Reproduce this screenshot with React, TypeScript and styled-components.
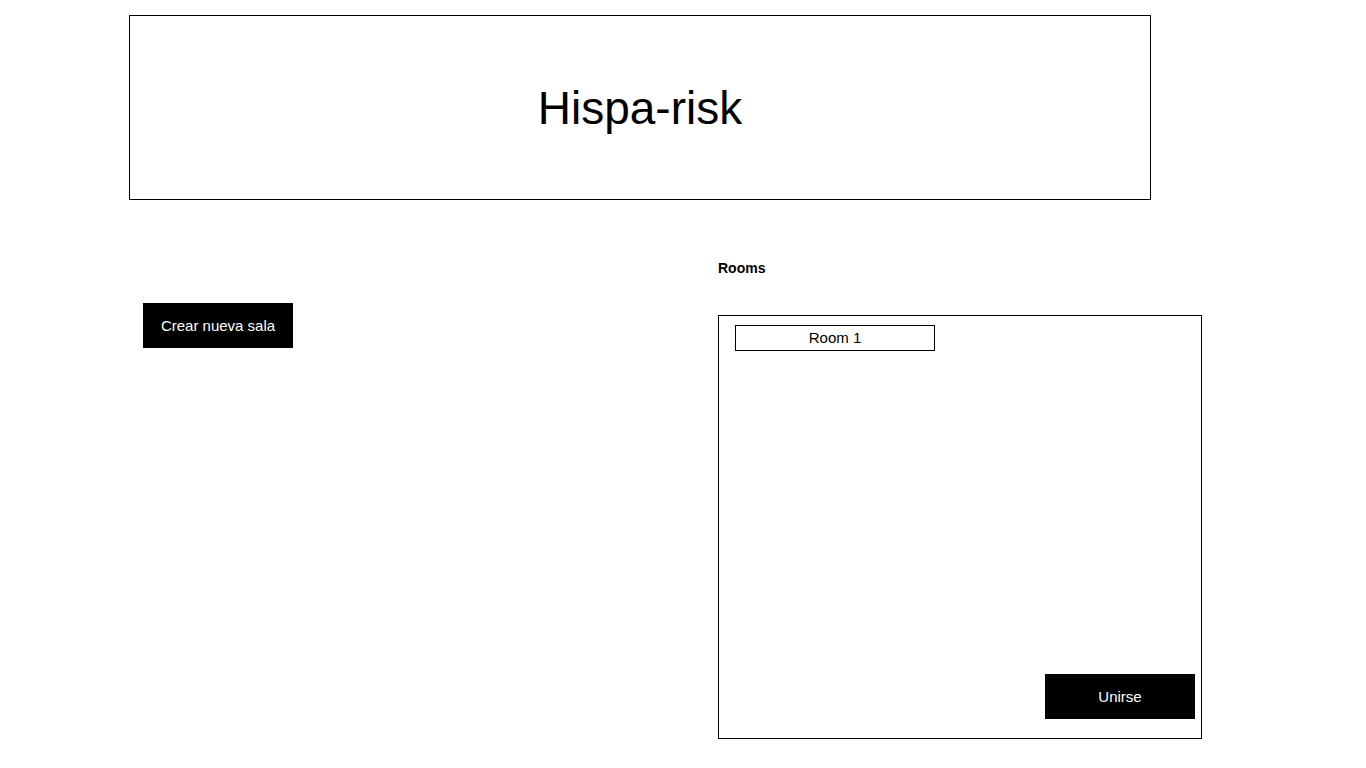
import React from "react";
import styled, { createGlobalStyle } from "styled-components";

const Global = createGlobalStyle`
  html, body { margin: 0; padding: 0; background: #fff; }
  body { font-family: "Liberation Sans", Arial, sans-serif; color: #000; }
`;

const Page = styled.div`
  width: 1366px;
  height: 768px;
  padding-top: 15px;
  box-sizing: border-box;
  display: flex;
  flex-direction: column;
`;

const Header = styled.header`
  margin-left: 129px;
  width: 1022px;
  height: 185px;
  box-sizing: border-box;
  border: 1px solid #000;
  display: flex;
  align-items: center;
  justify-content: center;
`;

const Title = styled.h1`
  margin: 0;
  font-weight: 400;
  font-size: 46px;
  line-height: 1;
`;

const Main = styled.div`
  display: flex;
  margin-top: 59px;
`;

const LeftCol = styled.div`
  flex: 0 0 718px;
  padding-left: 143px;
  padding-top: 44px;
  box-sizing: border-box;
`;

const RightCol = styled.div`
  display: flex;
  flex-direction: column;
`;

const SectionTitle = styled.h5`
  margin: 1px 0 0;
  font-size: 14px;
  font-weight: 700;
  line-height: 16px;
  height: 16px;
`;

const Button = styled.button`
  width: 150px;
  height: 45px;
  border: none;
  border-radius: 0;
  background: #000;
  color: #fff;
  font-family: "Liberation Sans", Arial, sans-serif;
  font-size: 15px;
  padding: 0;
  cursor: pointer;
`;

const RoomsBox = styled.div`
  margin-top: 39px;
  width: 484px;
  height: 424px;
  box-sizing: border-box;
  border: 1px solid #000;
  padding: 9px 6px 19px 16px;
  display: flex;
  flex-direction: column;
  justify-content: space-between;
`;

const RoomItem = styled.div`
  width: 200px;
  height: 26px;
  box-sizing: border-box;
  border: 1px solid #000;
  font-size: 15px;
  line-height: 24px;
  text-align: center;
`;

const Footer = styled.div`
  display: flex;
  justify-content: flex-end;
`;

export default function App() {
  return (
    <>
      <Global />
      <Page>
        <Header>
          <Title>Hispa-risk</Title>
        </Header>
        <Main>
          <LeftCol>
            <Button>Crear nueva sala</Button>
          </LeftCol>
          <RightCol>
            <SectionTitle>Rooms</SectionTitle>
            <RoomsBox>
              <RoomItem>Room 1</RoomItem>
              <Footer>
                <Button>Unirse</Button>
              </Footer>
            </RoomsBox>
          </RightCol>
        </Main>
      </Page>
    </>
  );
}
